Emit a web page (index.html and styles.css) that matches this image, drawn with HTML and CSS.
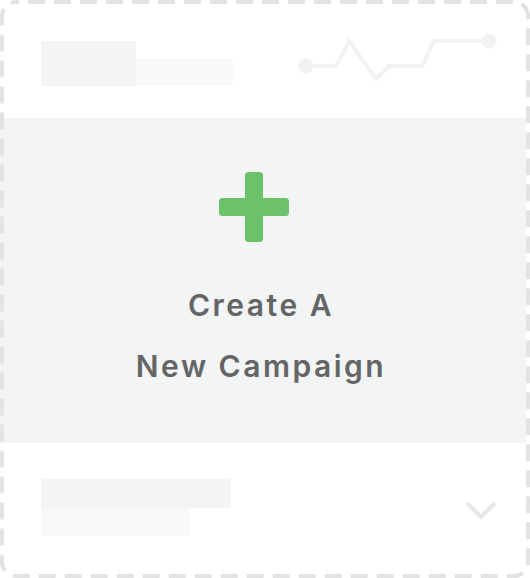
FILE: index.html
```html
<!DOCTYPE html>
<html>
<head>
<meta charset="utf-8">
<link rel="stylesheet" href="styles.css">
</head>
<body>
<div class="card">
  <div class="top">
    <div class="ph-group">
      <div class="ph ph-a"></div>
      <div class="ph ph-b"></div>
    </div>
    <svg class="chart" width="200" height="60" viewBox="0 0 200 60">
      <polyline points="9,36 39,36 52,11 79,49 92,36 125,36 137,11 192,11" fill="none" stroke="#f1f2f2" stroke-width="4" stroke-linejoin="miter"/>
      <circle cx="9" cy="36" r="7.7" fill="#f1f2f2"/>
      <circle cx="192" cy="11" r="7.5" fill="#f1f2f2"/>
    </svg>
  </div>
  <div class="create">
    <svg class="plus" width="70" height="70" viewBox="0 0 70 70">
      <rect x="26" y="0" width="18" height="70" rx="3.5" fill="#6cc16b"/>
      <rect x="0" y="26" width="70" height="18" rx="3.5" fill="#6cc16b"/>
    </svg>
    <div class="label">
      <div class="line">Create A</div>
      <div class="line">New Campaign</div>
    </div>
  </div>
  <div class="bottom">
    <div class="ph-stack">
      <div class="ph ph-c"></div>
      <div class="ph ph-d"></div>
    </div>
    <svg class="chev" width="34" height="20" viewBox="0 0 34 20">
      <polyline points="2,3 16,17 30,3" fill="none" stroke="#e6e7e8" stroke-width="4"/>
    </svg>
  </div>
  <svg class="frame" width="530" height="578" viewBox="0 0 530 578">
    <rect x="2" y="2" width="526" height="574" rx="14" ry="14" fill="none" stroke="#e2e3e5" stroke-width="4" stroke-dasharray="17 9" stroke-dashoffset="14"/>
  </svg>
</div>
</body>
</html>
```
FILE: styles.css
```css
html, body {
  margin: 0;
  padding: 0;
  background: #ffffff;
}
.card {
  position: relative;
  width: 530px;
  height: 578px;
  background: #ffffff;
  font-family: "Inter", "Open Sans", "Liberation Sans", sans-serif;
}
.top {
  height: 118px;
  box-sizing: border-box;
  display: flex;
  align-items: flex-start;
  justify-content: space-between;
  padding: 30px 33px 0 41px;
}
.ph-group {
  margin-top: 11px;
  display: flex;
  align-items: flex-end;
}
.ph-a {
  width: 95px;
  height: 45px;
  background: #f3f4f4;
}
.ph-b {
  width: 97px;
  height: 28px;
  background: #f8f9f9;
}
.chart {
  display: block;
}
.create {
  width: 526px;
  height: 325px;
  background: #f3f4f4;
  display: flex;
  flex-direction: column;
  align-items: center;
  box-sizing: border-box;
  padding-top: 54px;
}
.plus {
  display: block;
  margin-right: 18px;
}
.label {
  margin-top: 33px;
  padding-right: 4px;
  text-align: center;
  color: #646565;
  font-size: 30px;
  font-weight: 600;
  letter-spacing: 2.5px;
  line-height: 61px;
}
.bottom {
  display: flex;
  justify-content: space-between;
  align-items: flex-start;
  padding: 36px 31px 0 41px;
}
.ph-stack {
  display: flex;
  flex-direction: column;
}
.ph-c {
  width: 190px;
  height: 29px;
  background: #f3f4f4;
}
.ph-d {
  width: 149px;
  height: 28px;
  background: #f8f9f9;
}
.chev {
  display: block;
  margin-top: 21px;
}
.frame {
  position: absolute;
  left: 0;
  top: 0;
  pointer-events: none;
}
```
